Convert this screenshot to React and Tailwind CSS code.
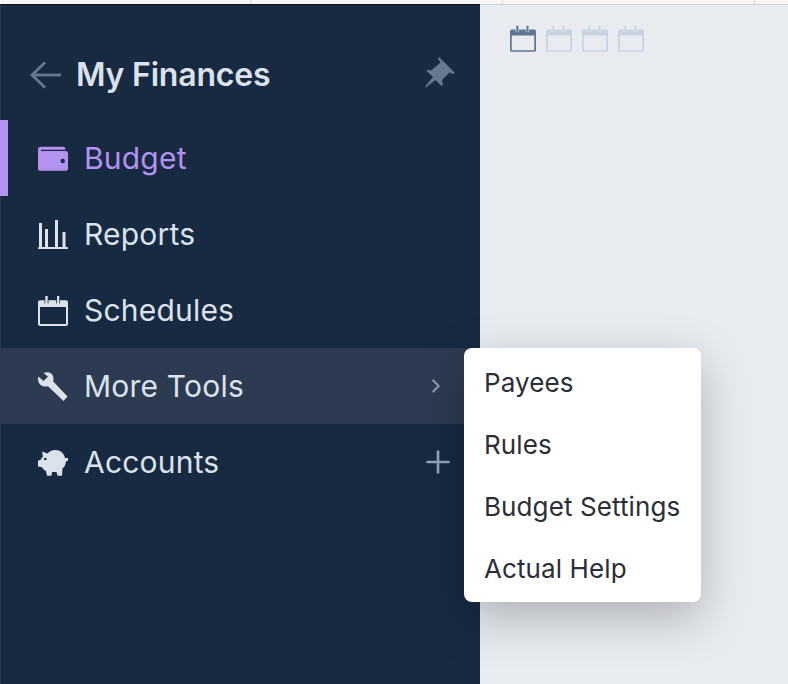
import { ChevronRight, Plus } from 'lucide-react';

function Wallet({ className }) {
    return (
        <svg viewBox="0 0 30 30" className={className} fill="currentColor">
            <path fillRule="evenodd" d="M3 3.7H25A2.3 2.3 0 0 1 27.3 6V6.7H3V8H28A2 2 0 0 1 30 10V25.7A2 2 0 0 1 28 27.7H2A2 2 0 0 1 0 25.7V6.7A3 3 0 0 1 3 3.7ZM22.5 18a2.2 2.2 0 1 0 4.4 0a2.2 2.2 0 1 0 -4.4 0Z" />
        </svg>
    );
}

function Reports({ className }) {
    return (
        <svg viewBox="0 0 30 30" className={className} fill="currentColor">
            <rect x="1" y="4" width="3" height="25" />
            <rect x="7" y="10" width="3" height="19" />
            <rect x="17" y="1" width="3" height="28" />
            <rect x="24.5" y="13" width="3" height="16" />
            <rect x="0" y="28" width="30" height="2.4" rx="1" />
        </svg>
    );
}

function Calendar({ className }) {
    return (
        <svg viewBox="0 0 30 30" className={`overflow-visible ${className}`} fill="currentColor">
            <path fillRule="evenodd" d="M2 5.3H6.6V8.5H7.3V1H9.7V8.5H10.4V5.3H18.3V8.5H19V1H21.3V8.5H22V5.3H28A2 2 0 0 1 30 7.3V29A2 2 0 0 1 28 31H2A2 2 0 0 1 0 29V7.3A2 2 0 0 1 2 5.3ZM2 12V29H28V12Z" />
        </svg>
    );
}

function Wrench({ className }) {
    return (
        <svg viewBox="0 0 30 30" className={className} fill="currentColor">
            <path d="M10 1.2C13 1.5 15.5 4 15.5 7.5C15.5 8.5 15.3 9.5 15 10.3L29.5 25.5L25.5 30L10 15.3C9.3 15.5 8.5 15.6 7.5 15.6C3.5 15.6 0 12.5 0 8C0 7 0.1 6.3 0.4 5.5L5.5 10L10 5.8L5.7 2C7 1.4 8.5 1.1 10 1.2Z" />
        </svg>
    );
}

function Piggy({ className }) {
    return (
        <svg viewBox="0 0 30 30" className={className} fill="currentColor">
            <path fillRule="evenodd" d="M4 4.5L9.5 6.5C11.5 4.3 14 3 17 3C22.5 3 26 6 27 11L30 11V13.5L28 14.5C27.5 18 26.5 20 24.5 21.5L24 28.7H19.5L18.5 25H14L13.5 28.7H9L8 24C6 23 4.7 21.5 3.5 20L0 19.5V13.5L2.5 13C3.2 11.5 4 10.5 5 9.5ZM6 12a1.3 1.3 0 1 0 2.6 0a1.3 1.3 0 1 0 -2.6 0Z" />
        </svg>
    );
}

function Pin({ className }) {
    return (
        <svg viewBox="0 0 32 32" className={className} fill="currentColor">
            <path d="M14 0L30 16L28 17L24.5 15.5L17 23L18 28L16.5 29L10.5 23L1 30.5L0 29.5L8 20L1.5 14L3 12.5L6 13.5L15.5 5.5L13 2Z" />
        </svg>
    );
}

function BackArrow({ className }) {
    return (
        <svg viewBox="0 0 32 28" className={className} fill="none" stroke="currentColor" strokeWidth="2.8">
            <path d="M31 14H2" />
            <path d="M15 1.5L2 14L15 26.5" />
        </svg>
    );
}

function NavRow({ icon: Icon, label, active, hovered, right, children }) {
    return (
        <div className={`relative flex h-[76px] items-center pl-[37px] ${active ? 'text-[#b392f0]' : 'text-[#dbe2ec]'} ${hovered ? 'bg-[#2d3b52]' : ''}`}>
            {active && <div className="absolute -left-px top-0 h-full w-2 bg-[#b392f0]"></div>}
            <div className="flex h-[30px] w-[30px] shrink-0 items-center justify-center">
                <Icon className="h-[30px] w-[30px]" />
            </div>
            <span className="ml-[16px] text-[30px] leading-none tracking-[0.2px]">{label}</span>
            {right}
            {children}
        </div>
    );
}

const MENU = ['Payees', 'Rules', 'Budget Settings', 'Actual Help'];

export default function App() {
    return (
        <div className="flex h-[684px] w-[788px] flex-col overflow-hidden bg-[#e8ebf0] font-['Inter',sans-serif]">
            {/* browser strip */}
            <div className="flex h-[5px] shrink-0 border-b border-[#cfcfcf] bg-[#f6f6f6]">
                <div className="w-[251px] border-r border-[#d8d8d8]"></div>
                <div className="w-[252px] border-r border-[#d8d8d8]"></div>
                <div className="w-[252px] border-r border-[#d8d8d8]"></div>
            </div>

            <div className="flex min-h-0 flex-1">
                {/* sidebar */}
                <aside className="relative z-10 -mt-px w-[480px] shrink-0 border-l border-t border-l-[#2b3a50] border-t-[#0b1220] bg-[#182a42]">
                    <div className="flex h-[115px] items-center pl-[29px] pr-[23px] pt-[24px]">
                        <BackArrow className="h-[28px] w-[32px] text-[#66788f]" />
                        <span className="ml-[14px] text-[32px] font-semibold leading-none tracking-[-0.2px] text-[#dbe2ec]">My Finances</span>
                        <Pin className="-mt-[4px] ml-auto h-[32px] w-[32px] text-[#66788f]" />
                    </div>

                    <NavRow icon={Wallet} label="Budget" active />
                    <NavRow icon={Reports} label="Reports" />
                    <NavRow icon={Calendar} label="Schedules" />
                    <NavRow
                        icon={Wrench}
                        label="More Tools"
                        hovered
                        right={<ChevronRight className="ml-auto mr-[33px] h-[22px] w-[22px] text-[#8a99ad]" strokeWidth={2.4} />}
                    >
                        {/* popup menu */}
                        <div className="absolute left-[463px] top-0 z-10 w-[237px] rounded-[8px] bg-white pb-[2px] pt-[4px] shadow-[0_16px_48px_rgba(0,0,0,0.25)]">
                            {MENU.map((item) => (
                                <div key={item} className="flex h-[62px] items-center whitespace-nowrap pl-[20px] text-[26px] leading-none tracking-[0.1px] text-[#2c2e36]">
                                    {item}
                                </div>
                            ))}
                        </div>
                    </NavRow>
                    <NavRow
                        icon={Piggy}
                        label="Accounts"
                        right={<Plus className="ml-auto mr-[24px] h-[36px] w-[36px] text-[#94a3b8]" strokeWidth={1.8} />}
                    />
                </aside>

                {/* calendar strip */}
                <main className="flex-1 pl-[30px] pt-[20px]">
                    <div className="flex gap-[10px]">
                        <Calendar className="h-[26px] w-[26px] text-[#5f7692]" />
                        <Calendar className="h-[26px] w-[26px] text-[#c8d3e1]" />
                        <Calendar className="h-[26px] w-[26px] text-[#c8d3e1]" />
                        <Calendar className="h-[26px] w-[26px] text-[#c8d3e1]" />
                    </div>
                </main>
            </div>
        </div>
    );
}
